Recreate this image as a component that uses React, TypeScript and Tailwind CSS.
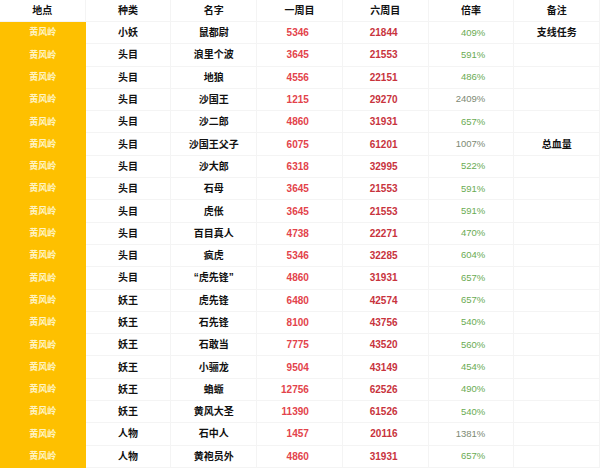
// 黄风岭 怪物血量表
type Row = {
  kind: string;
  name: string;
  first: number;
  sixth: number;
  rate: string;
  note?: string;
  gray?: boolean;
};

const rows: Row[] = [
  { kind: "小妖", name: "鼠都尉", first: 5346, sixth: 21844, rate: "409%", note: "支线任务" },
  { kind: "头目", name: "浪里个波", first: 3645, sixth: 21553, rate: "591%" },
  { kind: "头目", name: "地狼", first: 4556, sixth: 22151, rate: "486%" },
  { kind: "头目", name: "沙国王", first: 1215, sixth: 29270, rate: "2409%", gray: true },
  { kind: "头目", name: "沙二郎", first: 4860, sixth: 31931, rate: "657%" },
  { kind: "头目", name: "沙国王父子", first: 6075, sixth: 61201, rate: "1007%", note: "总血量", gray: true },
  { kind: "头目", name: "沙大郎", first: 6318, sixth: 32995, rate: "522%" },
  { kind: "头目", name: "石母", first: 3645, sixth: 21553, rate: "591%" },
  { kind: "头目", name: "虎伥", first: 3645, sixth: 21553, rate: "591%" },
  { kind: "头目", name: "百目真人", first: 4738, sixth: 22271, rate: "470%" },
  { kind: "头目", name: "疯虎", first: 5346, sixth: 32285, rate: "604%" },
  { kind: "头目", name: "“虎先锋”", first: 4860, sixth: 31931, rate: "657%" },
  { kind: "妖王", name: "虎先锋", first: 6480, sixth: 42574, rate: "657%" },
  { kind: "妖王", name: "石先锋", first: 8100, sixth: 43756, rate: "540%" },
  { kind: "妖王", name: "石敢当", first: 7775, sixth: 43520, rate: "560%" },
  { kind: "妖王", name: "小骊龙", first: 9504, sixth: 43149, rate: "454%" },
  { kind: "妖王", name: "蝜蝂", first: 12756, sixth: 62526, rate: "490%" },
  { kind: "妖王", name: "黄风大圣", first: 11390, sixth: 61526, rate: "540%" },
  { kind: "人物", name: "石中人", first: 1457, sixth: 20116, rate: "1381%", gray: true },
  { kind: "人物", name: "黄袍员外", first: 4860, sixth: 31931, rate: "657%" },
];

const headers = ["地点", "种类", "名字", "一周目", "六周目", "倍率", "备注"];

const cell = "flex items-center border-r border-b border-[#f4f4f4]";

export default function App() {
  return (
    <main
      className="h-[468px] w-[600px] overflow-hidden bg-white text-[10px] text-[#111]"
      style={{ fontFamily: '"Liberation Sans", "Noto Sans CJK SC", sans-serif' }}
    >
      <div className="grid grid-cols-7">
        {headers.map((h) => (
          <div key={h} className={`${cell} h-[22px] justify-center font-semibold`}>
            {h}
          </div>
        ))}

        {rows.map((r, i) => (
          <div key={i} className="contents">
            <div className="flex h-[22.3px] items-center justify-center bg-[#fec000] text-[9px] font-semibold text-[#fff4c4]">
              黄风岭
            </div>
            <div className={`${cell} justify-center font-semibold`}>{r.kind}</div>
            <div className={`${cell} justify-center font-semibold`}>{r.name}</div>
            <div className={`${cell} justify-end pr-[33px] font-bold text-[#e3434b]`}>{r.first}</div>
            <div className={`${cell} justify-end pr-[30px] font-bold text-[#c8333d]`}>{r.sixth}</div>
            <div
              className={`${cell} justify-end pr-[28px] text-[9.5px] ${
                r.gray ? "text-[#7d8a74]" : "text-[#6aab52]"
              }`}
            >
              {r.rate}
            </div>
            <div className={`${cell} justify-center font-semibold`}>{r.note ?? ""}</div>
          </div>
        ))}
      </div>
    </main>
  );
}
